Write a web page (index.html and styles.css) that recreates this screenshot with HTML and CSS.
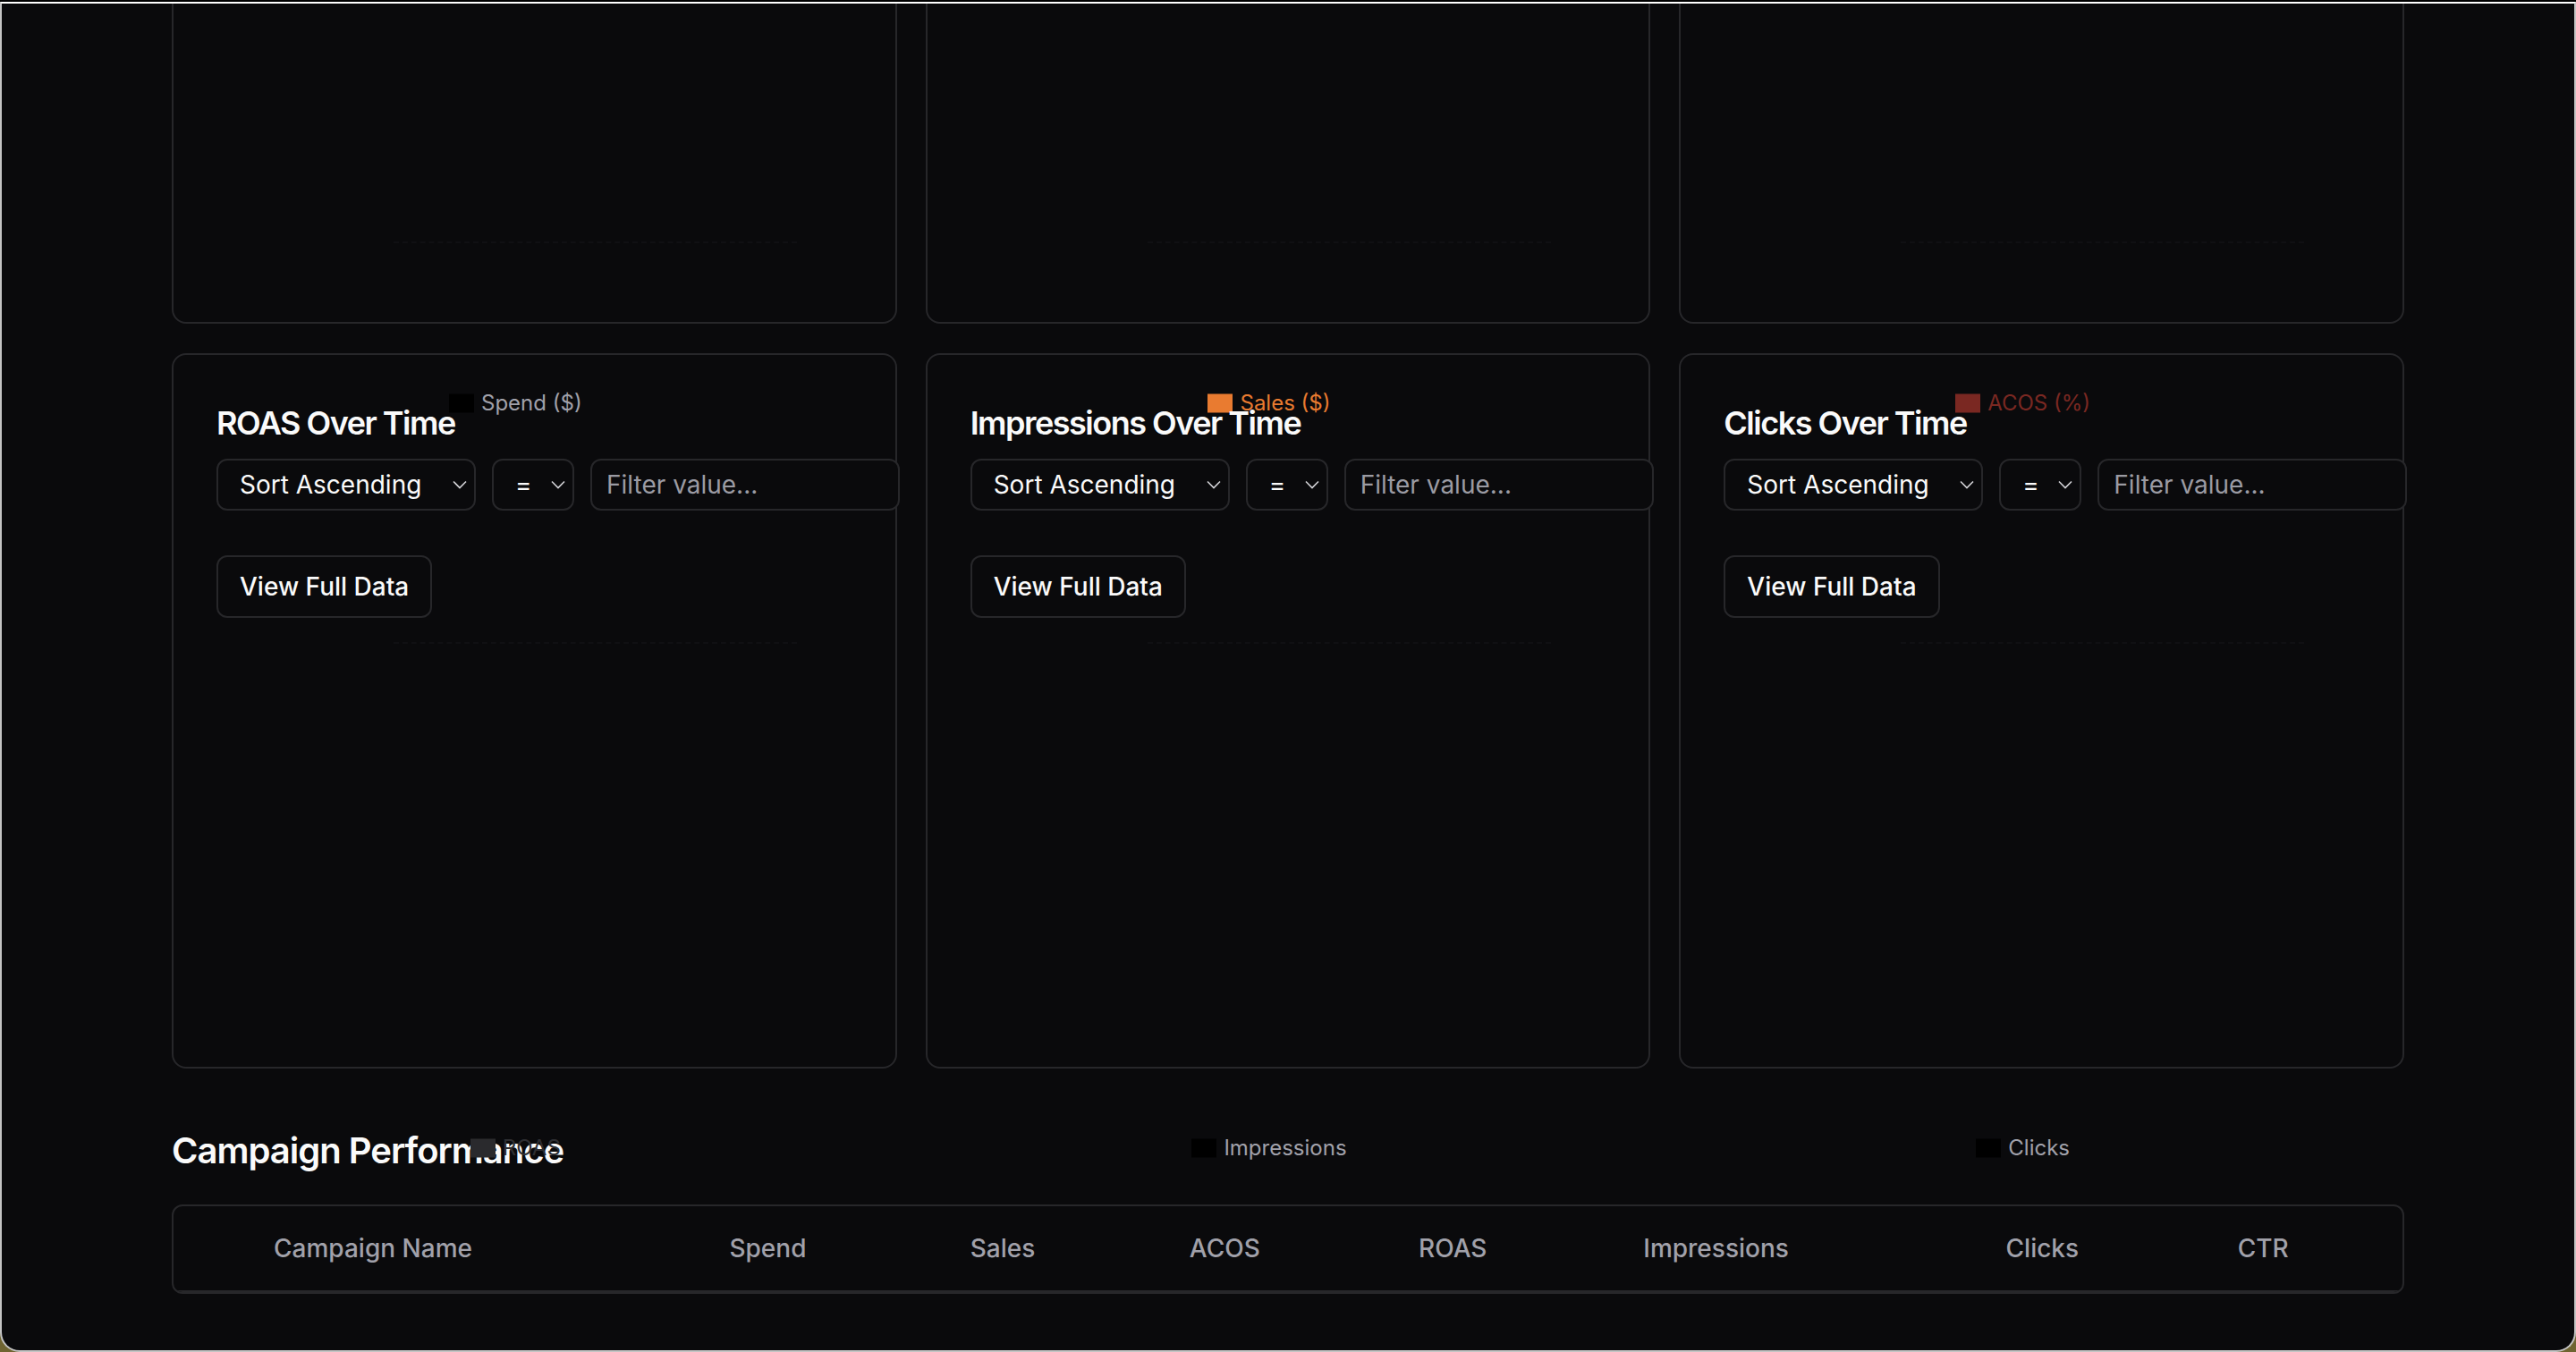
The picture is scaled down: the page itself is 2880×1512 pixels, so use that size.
FILE: index.html
```html
<!DOCTYPE html>
<html lang="en">
<head>
  <meta charset="UTF-8">
  <meta name="viewport" content="width=device-width, initial-scale=1.0">
  <title>Campaign Dashboard</title>
  <link rel="stylesheet" href="styles.css">
</head>
<body>
  <div class="topbar"></div>
  <div class="window">
    <div class="viewport" id="viewport">
      <main class="page">
        <section class="chart-grid" id="chartGrid"></section>

        <h2 class="section-title">Campaign Performance</h2>
        <div class="table-wrap">
          <table class="perf-table">
            <colgroup>
              <col class="w-toggle">
              <col class="w-name">
              <col class="w-spend">
              <col class="w-sales">
              <col class="w-acos">
              <col class="w-roas">
              <col class="w-impr">
              <col class="w-clicks">
              <col class="w-ctr">
            </colgroup>
            <thead>
              <tr>
                <th></th>
                <th>Campaign Name</th>
                <th>Spend</th>
                <th>Sales</th>
                <th>ACOS</th>
                <th>ROAS</th>
                <th>Impressions</th>
                <th>Clicks</th>
                <th>CTR</th>
              </tr>
            </thead>
            <tbody id="campaignRows"></tbody>
          </table>
        </div>
      </main>
    </div>
  </div>

  <script>
    const charts = [
      { title: "Spend Over Time", legend: "Spend ($)", tone: "spend", row: "top" },
      { title: "Sales Over Time", legend: "Sales ($)", tone: "sales", row: "top" },
      { title: "ACOS Over Time", legend: "ACOS (%)", tone: "acos", row: "top" },
      { title: "ROAS Over Time", legend: "ROAS", tone: "roas", row: "bottom" },
      { title: "Impressions Over Time", legend: "Impressions", tone: "impr", row: "bottom" },
      { title: "Clicks Over Time", legend: "Clicks", tone: "clicks", row: "bottom" }
    ];

    const chevron = `<svg class="chevron" width="16" height="10" viewBox="0 0 16 10"><polyline points="1,1.5 8,8.5 15,1.5" fill="none" stroke="currentColor" stroke-width="1.6"/></svg>`;

    function renderCharts() {
      const grid = document.getElementById("chartGrid");
      grid.innerHTML = charts.map(c => `
        <div class="card">
          <h3 class="card-title">${c.title}</h3>
          <div class="controls">
            <div class="select-box sort-box">
              <select><option>Sort Ascending</option><option>Sort Descending</option></select>
              ${chevron}
            </div>
            <div class="select-box op-box">
              <select><option>=</option><option>&gt;</option><option>&lt;</option></select>
              ${chevron}
            </div>
            <input type="text" class="filter-input" placeholder="Filter value...">
          </div>
          <button class="btn-outline">View Full Data</button>
          <div class="gridline ${c.row === "top" ? "gridline-low" : ""}"></div>
          <div class="legend legend-${c.tone}">
            <svg width="28" height="28" viewBox="0 0 32 32"><path d="M0,4h32v24h-32z"/></svg>
            <span>${c.legend}</span>
          </div>
        </div>`).join("");
    }

    renderCharts();
    document.getElementById("viewport").scrollTop = 506;
  </script>
</body>
</html>
```

FILE: styles.css
```css
body {
  margin: 0;
  background: #6f6431;
  font-family: "Inter", "Liberation Sans", sans-serif;
  color: #fafafa;
}
.topbar {
  height: 2px;
  background: #000;
}
.window {
  height: 1510px;
  box-sizing: border-box;
  border: 2px solid #c4c4c4;
  border-top-color: #fff;
  border-radius: 0 0 22px 22px;
  background: #0a0a0c;
  overflow: hidden;
}
.viewport {
  height: 100%;
  overflow: hidden;
}
.page {
  max-width: 2560px;
  margin: 0 auto;
  padding: 64px 32px 160px;
  box-sizing: border-box;
}
.chart-grid {
  display: grid;
  grid-template-columns: repeat(3, minmax(0, 1fr));
  gap: 33px 32px;
}
.card {
  position: relative;
  display: flex;
  flex-direction: column;
  align-items: flex-start;
  min-width: 0;
  height: 800px;
  box-sizing: border-box;
  padding: 48px;
  border: 2px solid #27272a;
  border-radius: 16px;
}
.card-title {
  margin: 0;
  font-size: 36px;
  line-height: 56px;
  font-weight: 600;
  letter-spacing: -1.5px;
  white-space: nowrap;
  color: #fafafa;
}
.controls {
  display: flex;
  gap: 18px;
  margin-top: 12px;
}
.select-box {
  display: flex;
  align-items: center;
  flex-shrink: 0;
  height: 58px;
  box-sizing: border-box;
  padding: 0 8px 0 24px;
  border: 2px solid #27272a;
  border-radius: 12px;
  background: #0a0a0c;
  color: #e4e4e7;
}
.sort-box { width: 290px; }
.op-box { width: 92px; }
.select-box select {
  flex: 1;
  min-width: 0;
  appearance: none;
  -webkit-appearance: none;
  border: none;
  outline: none;
  padding: 0;
  background: transparent;
  color: #fafafa;
  font-family: inherit;
  font-size: 28px;
  line-height: 40px;
}
.chevron {
  flex-shrink: 0;
  color: #d4d4d8;
}
.filter-input {
  flex-shrink: 0;
  width: 346px;
  height: 58px;
  box-sizing: border-box;
  padding: 0 16px;
  border: 2px solid #27272a;
  border-radius: 12px;
  background: #0a0a0c;
  color: #fafafa;
  font-family: inherit;
  font-size: 28px;
  outline: none;
}
.filter-input::placeholder {
  color: #9b9ba3;
}
.btn-outline {
  margin-top: 50px;
  padding: 13px 24px;
  border: 2px solid #27272a;
  border-radius: 12px;
  background: transparent;
  color: #fafafa;
  font-family: inherit;
  font-size: 28px;
  line-height: 40px;
  font-weight: 500;
  cursor: pointer;
}
.gridline {
  position: absolute;
  top: 321px;
  left: 246px;
  width: 451px;
  border-top: 2px dashed #101013;
}
.gridline-low {
  top: 706px;
}
.legend {
  position: absolute;
  top: calc(100% + 77px);
  left: 0;
  right: 42px;
  display: flex;
  justify-content: center;
  align-items: center;
  font-size: 24px;
  line-height: 28px;
  white-space: nowrap;
}
.legend svg {
  margin-right: 8px;
}
.legend-spend svg, .legend-impr svg, .legend-clicks svg { fill: #000; }
.legend-spend, .legend-impr, .legend-clicks { color: #a1a1aa; }
.legend-sales svg { fill: #e97b30; }
.legend-sales { color: #e97b30; }
.legend-acos svg { fill: #7a2822; }
.legend-acos { color: #7a2822; }
.legend-roas svg { fill: #2a2a2d; }
.legend-roas { color: #2e2e32; }
.section-title {
  margin: 64px 0 32px;
  font-size: 40px;
  line-height: 56px;
  font-weight: 600;
  letter-spacing: -1px;
  color: #fafafa;
}
.table-wrap {
  border: 2px solid #27272a;
  border-radius: 12px;
  overflow: hidden;
}
.perf-table {
  width: 100%;
  table-layout: fixed;
  border-collapse: separate;
  border-spacing: 0;
}
.perf-table th {
  padding: 27px 32px;
  border-bottom: 2px solid #27272a;
  text-align: left;
  white-space: nowrap;
  font-size: 28px;
  line-height: 40px;
  font-weight: 500;
  color: #a1a1aa;
}
.w-toggle { width: 80px; }
.w-name { width: 509px; }
.w-spend { width: 269px; }
.w-sales { width: 245px; }
.w-acos { width: 256px; }
.w-roas { width: 251px; }
.w-impr { width: 405px; }
.w-clicks { width: 259px; }
.w-ctr { width: 216px; }
```
